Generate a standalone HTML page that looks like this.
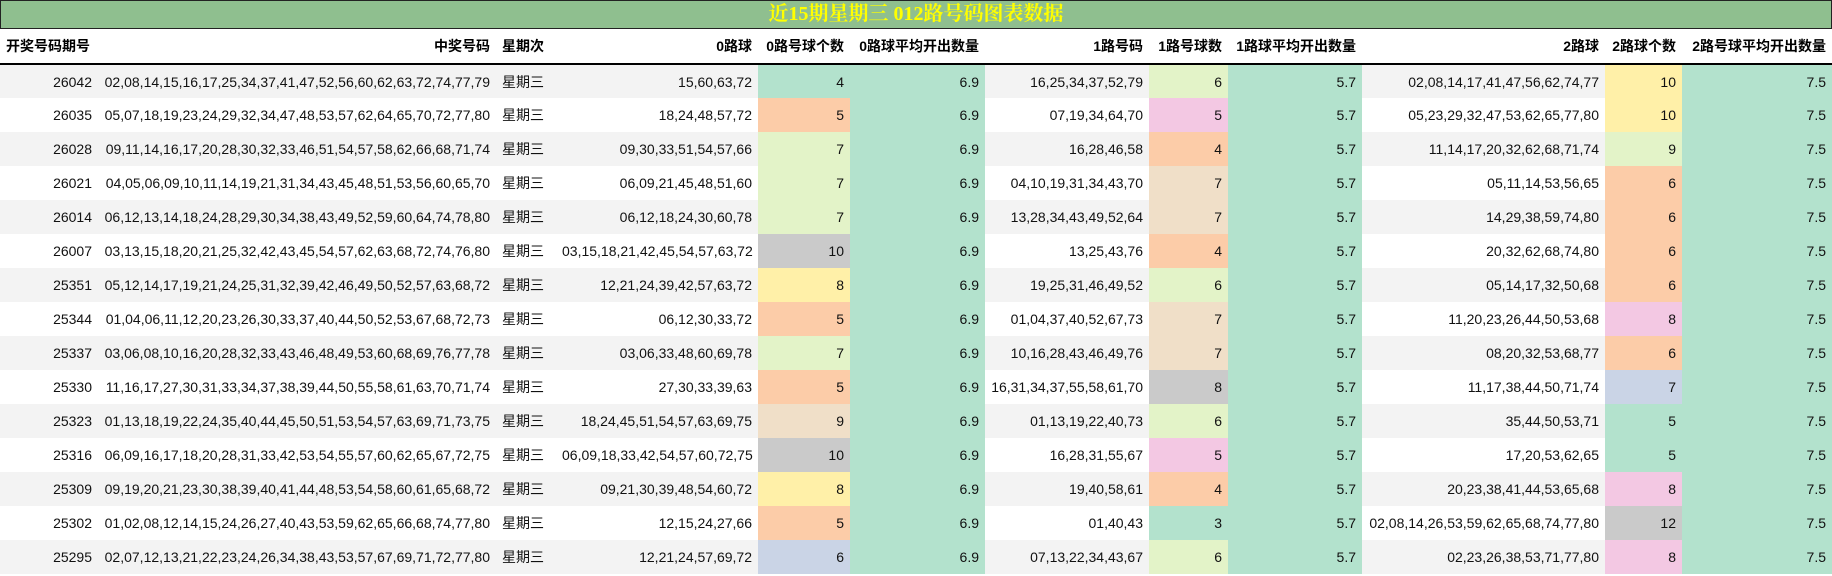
<!DOCTYPE html>
<html><head><meta charset="utf-8">
<style>
*{margin:0;padding:0;box-sizing:border-box}
body{width:1832px;height:576px;background:#fff;font-family:"Liberation Sans","Noto Sans CJK SC",sans-serif;overflow:hidden;position:relative}
.title{position:absolute;left:0;top:0;width:1832px;height:29px;background:#8fbf8f;border:1px solid #222;color:#ffff00;font-weight:bold;font-size:20px;text-align:center;line-height:27px;font-family:"Liberation Serif","Noto Serif CJK SC",serif}
table{position:absolute;left:0;top:29px;border-collapse:collapse;table-layout:fixed;width:1832px}
td,th{font-size:14px;text-align:right;padding:0 6px;white-space:nowrap;overflow:hidden}
th{height:35px;font-weight:bold;border-bottom:2px solid #000;font-size:14px}
td{height:34px;color:#111}
tr.g td{background:#f3f3f3}
th.l,td.l{text-align:left}
.m{background:#b3e2cd!important}
.y{background:#fff0a8!important}
.p{background:#fccca8!important}
.lg{background:#e3f3c8!important}
.pk{background:#f3c8e3!important}
.bg{background:#f0dfc8!important}
.gr{background:#cacaca!important}
.bl{background:#cad4e6!important}
</style></head><body>
<div class="title">近15期星期三 012路号码图表数据</div>
<table>
<colgroup><col style="width:98px"><col style="width:398px"><col style="width:60px"><col style="width:202px"><col style="width:92px"><col style="width:135px"><col style="width:164px"><col style="width:79px"><col style="width:134px"><col style="width:243px"><col style="width:77px"><col style="width:150px"></colgroup>
<tr><th class="l">开奖号码期号</th><th>中奖号码</th><th class="l">星期次</th><th>0路球</th><th>0路号球个数</th><th>0路球平均开出数量</th><th>1路号码</th><th>1路号球数</th><th>1路球平均开出数量</th><th>2路球</th><th>2路球个数</th><th>2路号球平均开出数量</th></tr>
<tr class="g"><td>26042</td><td>02,08,14,15,16,17,25,34,37,41,47,52,56,60,62,63,72,74,77,79</td><td class="l">星期三</td><td>15,60,63,72</td><td class="m">4</td><td class="m">6.9</td><td>16,25,34,37,52,79</td><td class="lg">6</td><td class="m">5.7</td><td>02,08,14,17,41,47,56,62,74,77</td><td class="y">10</td><td class="m">7.5</td></tr>
<tr><td>26035</td><td>05,07,18,19,23,24,29,32,34,47,48,53,57,62,64,65,70,72,77,80</td><td class="l">星期三</td><td>18,24,48,57,72</td><td class="p">5</td><td class="m">6.9</td><td>07,19,34,64,70</td><td class="pk">5</td><td class="m">5.7</td><td>05,23,29,32,47,53,62,65,77,80</td><td class="y">10</td><td class="m">7.5</td></tr>
<tr class="g"><td>26028</td><td>09,11,14,16,17,20,28,30,32,33,46,51,54,57,58,62,66,68,71,74</td><td class="l">星期三</td><td>09,30,33,51,54,57,66</td><td class="lg">7</td><td class="m">6.9</td><td>16,28,46,58</td><td class="p">4</td><td class="m">5.7</td><td>11,14,17,20,32,62,68,71,74</td><td class="lg">9</td><td class="m">7.5</td></tr>
<tr><td>26021</td><td>04,05,06,09,10,11,14,19,21,31,34,43,45,48,51,53,56,60,65,70</td><td class="l">星期三</td><td>06,09,21,45,48,51,60</td><td class="lg">7</td><td class="m">6.9</td><td>04,10,19,31,34,43,70</td><td class="bg">7</td><td class="m">5.7</td><td>05,11,14,53,56,65</td><td class="p">6</td><td class="m">7.5</td></tr>
<tr class="g"><td>26014</td><td>06,12,13,14,18,24,28,29,30,34,38,43,49,52,59,60,64,74,78,80</td><td class="l">星期三</td><td>06,12,18,24,30,60,78</td><td class="lg">7</td><td class="m">6.9</td><td>13,28,34,43,49,52,64</td><td class="bg">7</td><td class="m">5.7</td><td>14,29,38,59,74,80</td><td class="p">6</td><td class="m">7.5</td></tr>
<tr><td>26007</td><td>03,13,15,18,20,21,25,32,42,43,45,54,57,62,63,68,72,74,76,80</td><td class="l">星期三</td><td>03,15,18,21,42,45,54,57,63,72</td><td class="gr">10</td><td class="m">6.9</td><td>13,25,43,76</td><td class="p">4</td><td class="m">5.7</td><td>20,32,62,68,74,80</td><td class="p">6</td><td class="m">7.5</td></tr>
<tr class="g"><td>25351</td><td>05,12,14,17,19,21,24,25,31,32,39,42,46,49,50,52,57,63,68,72</td><td class="l">星期三</td><td>12,21,24,39,42,57,63,72</td><td class="y">8</td><td class="m">6.9</td><td>19,25,31,46,49,52</td><td class="lg">6</td><td class="m">5.7</td><td>05,14,17,32,50,68</td><td class="p">6</td><td class="m">7.5</td></tr>
<tr><td>25344</td><td>01,04,06,11,12,20,23,26,30,33,37,40,44,50,52,53,67,68,72,73</td><td class="l">星期三</td><td>06,12,30,33,72</td><td class="p">5</td><td class="m">6.9</td><td>01,04,37,40,52,67,73</td><td class="bg">7</td><td class="m">5.7</td><td>11,20,23,26,44,50,53,68</td><td class="pk">8</td><td class="m">7.5</td></tr>
<tr class="g"><td>25337</td><td>03,06,08,10,16,20,28,32,33,43,46,48,49,53,60,68,69,76,77,78</td><td class="l">星期三</td><td>03,06,33,48,60,69,78</td><td class="lg">7</td><td class="m">6.9</td><td>10,16,28,43,46,49,76</td><td class="bg">7</td><td class="m">5.7</td><td>08,20,32,53,68,77</td><td class="p">6</td><td class="m">7.5</td></tr>
<tr><td>25330</td><td>11,16,17,27,30,31,33,34,37,38,39,44,50,55,58,61,63,70,71,74</td><td class="l">星期三</td><td>27,30,33,39,63</td><td class="p">5</td><td class="m">6.9</td><td>16,31,34,37,55,58,61,70</td><td class="gr">8</td><td class="m">5.7</td><td>11,17,38,44,50,71,74</td><td class="bl">7</td><td class="m">7.5</td></tr>
<tr class="g"><td>25323</td><td>01,13,18,19,22,24,35,40,44,45,50,51,53,54,57,63,69,71,73,75</td><td class="l">星期三</td><td>18,24,45,51,54,57,63,69,75</td><td class="bg">9</td><td class="m">6.9</td><td>01,13,19,22,40,73</td><td class="lg">6</td><td class="m">5.7</td><td>35,44,50,53,71</td><td class="m">5</td><td class="m">7.5</td></tr>
<tr><td>25316</td><td>06,09,16,17,18,20,28,31,33,42,53,54,55,57,60,62,65,67,72,75</td><td class="l">星期三</td><td>06,09,18,33,42,54,57,60,72,75</td><td class="gr">10</td><td class="m">6.9</td><td>16,28,31,55,67</td><td class="pk">5</td><td class="m">5.7</td><td>17,20,53,62,65</td><td class="m">5</td><td class="m">7.5</td></tr>
<tr class="g"><td>25309</td><td>09,19,20,21,23,30,38,39,40,41,44,48,53,54,58,60,61,65,68,72</td><td class="l">星期三</td><td>09,21,30,39,48,54,60,72</td><td class="y">8</td><td class="m">6.9</td><td>19,40,58,61</td><td class="p">4</td><td class="m">5.7</td><td>20,23,38,41,44,53,65,68</td><td class="pk">8</td><td class="m">7.5</td></tr>
<tr><td>25302</td><td>01,02,08,12,14,15,24,26,27,40,43,53,59,62,65,66,68,74,77,80</td><td class="l">星期三</td><td>12,15,24,27,66</td><td class="p">5</td><td class="m">6.9</td><td>01,40,43</td><td class="m">3</td><td class="m">5.7</td><td>02,08,14,26,53,59,62,65,68,74,77,80</td><td class="gr">12</td><td class="m">7.5</td></tr>
<tr class="g"><td>25295</td><td>02,07,12,13,21,22,23,24,26,34,38,43,53,57,67,69,71,72,77,80</td><td class="l">星期三</td><td>12,21,24,57,69,72</td><td class="bl">6</td><td class="m">6.9</td><td>07,13,22,34,43,67</td><td class="lg">6</td><td class="m">5.7</td><td>02,23,26,38,53,71,77,80</td><td class="pk">8</td><td class="m">7.5</td></tr>
</table>
</body></html>
